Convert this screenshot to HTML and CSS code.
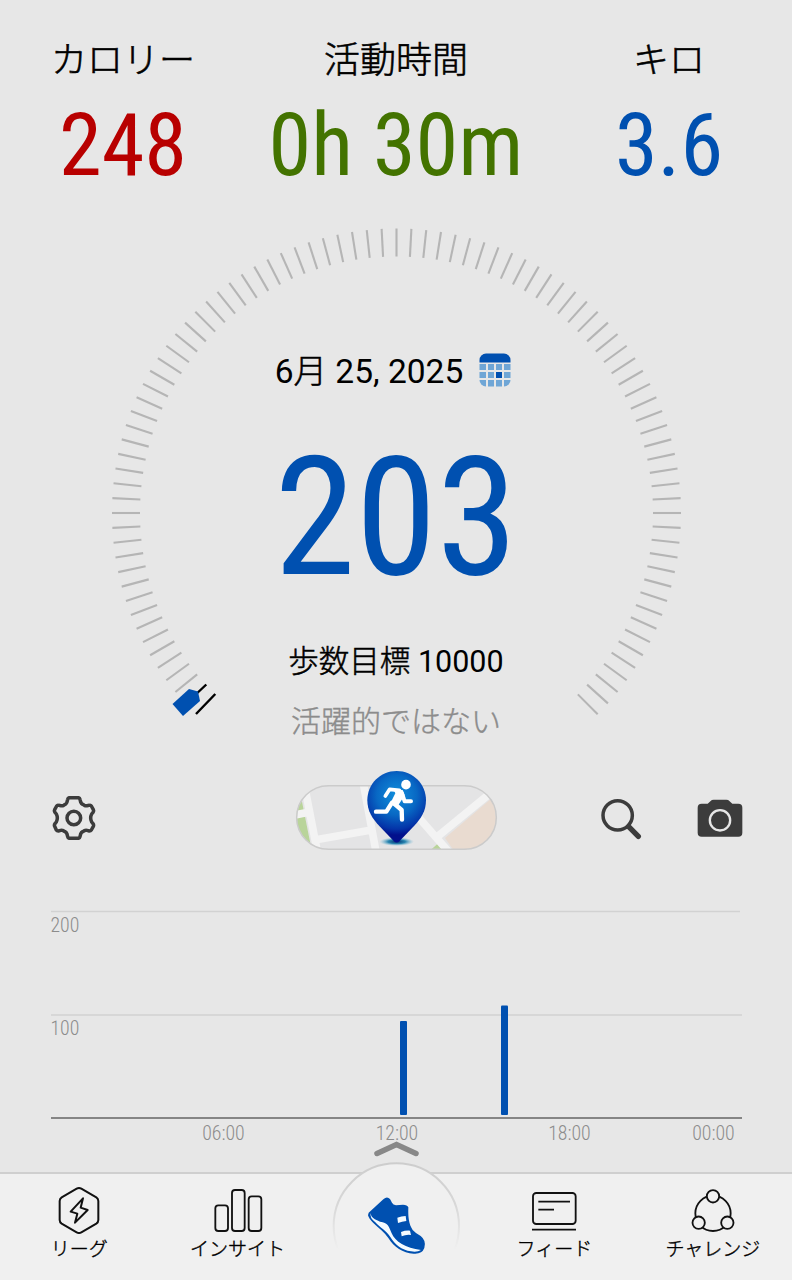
FILE: index.html
```html
<!DOCTYPE html>
<html lang="ja">
<head>
    <meta charset="UTF-8">
    <meta name="viewport" content="width=device-width, initial-scale=1.0">
    <title>歩数計</title>
    <link rel="stylesheet" href="styles.css">
</head>
<body>
    <div class="app">
        <div class="stats">
            <div class="stat">
                <div class="stat-label">カロリー</div>
                <div class="stat-value red">248</div>
            </div>
            <div class="stat">
                <div class="stat-label">活動時間</div>
                <div class="stat-value green">0h 30m</div>
            </div>
            <div class="stat">
                <div class="stat-label">キロ</div>
                <div class="stat-value blue">3.6</div>
            </div>
        </div>

        <div class="gauge">
            <svg class="gauge-dial" viewBox="0 200 792 560">
                <g id="ticks" stroke="#b5b5b5" stroke-width="2.1"></g>
                <path d="M196 714L215.300 694M192 698L206.300 684.500" stroke="#000" stroke-width="2.4"/>
                <path d="M172.500 704L189 689L198 691.500L200 701L183 716Z" fill="#0050b0"/>
            </svg>
            <div class="gauge-text">
                <div class="date">
                    <span>6<span class="kanji">月</span> 25, 2025</span>
                    <svg class="calendar" viewBox="0 0 32 34">
                        <clipPath id="cal-clip"><rect x="0.500" y="0.500" width="31" height="33" rx="6.500"/></clipPath>
                        <g clip-path="url(#cal-clip)">
                            <path d="M0 0H32V9.500H0Z" fill="#0050b0"/>
                            <path d="M0 11H7V17H0ZM9 11H15V17H9ZM17 11H23V17H17ZM25 11H32V17H25ZM0 19H7V25H0ZM9 19H15V25H9ZM25 19H32V25H25ZM0 27H7V34H0ZM9 27H15V34H9ZM17 27H23V34H17ZM25 27H32V34H25Z" fill="#6fa6d6"/>
                            <path d="M17 19H23V25H17Z" fill="#0050b0"/>
                        </g>
                    </svg>
                </div>
                <div class="count">203</div>
                <div class="goal"><span class="kanji">歩数目標</span> 10000</div>
                <div class="status">活躍的ではない</div>
            </div>
        </div>

        <div class="toolbar">
            <svg class="gear" viewBox="66 46 132 132" fill="none" stroke="#3c3c3c" stroke-width="10.5" stroke-linejoin="round">
                <path d="M119 51H144Q149 51 150 56L152 64Q154 69 158 71L163 74Q167 76 171 75L178 74Q182 73 184 76L190 87Q192 91 189 95L185 100Q179 112 185 124L189 129Q192 133 190 137L184 148Q182 151 178 151L171 149Q167 148 163 150L158 153Q154 155 152 160L150 168Q149 173 144 173H119Q114 173 113 168L111 160Q109 155 105 153L100 150Q96 148 92 149L85 151Q81 151 79 148L74 137Q72 133 75 129L79 124Q85 112 79 100L75 95Q72 91 74 87L80 76Q82 73 86 74L93 75Q97 76 101 74L106 71Q110 69 111 64L113 56Q114 51 119 51Z"/>
                <circle cx="131.500" cy="112" r="20.500"/>
            </svg>
            <svg class="map" viewBox="0 0 720 348">
                <defs>
                    <clipPath id="pill"><rect x="49" y="76" width="601" height="192" rx="96"/></clipPath>
                    <radialGradient id="pin" cx="350" cy="105" r="120" gradientUnits="userSpaceOnUse">
                        <stop offset="0" stop-color="#1290dc"/>
                        <stop offset="0.500" stop-color="#0868c4"/>
                        <stop offset="0.850" stop-color="#0434a8"/>
                        <stop offset="1" stop-color="#02108c"/>
                    </radialGradient>
                    <radialGradient id="shade">
                        <stop offset="0" stop-color="#003070"/>
                        <stop offset="0.500" stop-color="#2a86b0"/>
                        <stop offset="1" stop-color="#8ac4dc" stop-opacity="0"/>
                    </radialGradient>
                </defs>
                <g clip-path="url(#pill)">
                    <rect x="49" y="76" width="601" height="192" fill="#e4e4e5"/>
                    <path d="M40 110L66 125L95 270H40Z" fill="#b9d49a"/>
                    <path d="M495 234L640 110L660 270H520Z" fill="#e9dbd0"/>
                    <path d="M452 270L472 252L492 270Z" fill="#b9d49a"/>
                    <g stroke="#f3f3f3" stroke-width="23" fill="none">
                        <path d="M76 90L112 275M40 166L78 158M108 239L270 211M250 70L288 275M470 232L640 92"/>
                        <path d="M405 160L510 280"/>
                    </g>
                </g>
                <rect x="50" y="77" width="599" height="191" rx="95.500" fill="none" stroke="#cbcbcb" stroke-width="4.500"/>
                <ellipse cx="350" cy="245" rx="52" ry="13" fill="url(#shade)"/>
                <path d="M350 33C399 33 438 72 438 121C438 153 423 176 402 198L359 243Q350 252 341 243L298 198C277 176 262 153 262 121C262 72 301 33 350 33Z" fill="url(#pin)"/>
                <circle cx="378" cy="74" r="14.500" fill="#fff"/>
                <g fill="none" stroke="#fff" stroke-linecap="round" stroke-linejoin="round">
                    <path d="M316 108L329 88L358 91" stroke-width="11"/>
                    <path d="M366 100L374 124H393" stroke-width="12"/>
                    <path d="M336 128L319 155H288" stroke-width="13"/>
                    <path d="M344 132L365 150L366 179" stroke-width="13"/>
                </g>
                <path d="M340 88L368 90L374 106L351 142L330 132L346 100Z" fill="#fff"/>
            </svg>
            <svg class="search" viewBox="60 54 126 126" fill="none" stroke="#3c3c3c">
                <circle cx="113" cy="106" r="44" stroke-width="10.500"/>
                <path d="M146 140L175 169" stroke-width="16" stroke-linecap="round"/>
            </svg>
            <svg class="camera" viewBox="352 52 138 120">
                <path d="M366 69H384L393 61Q396 57 402 57H440Q446 57 449 61L458 69H476Q488 69 488 81V156Q488 168 476 168H366Q354 168 354 156V81Q354 69 366 69Z" fill="#3c3c3c"/>
                <circle cx="421" cy="119" r="30.500" fill="none" stroke="#e7e7e7" stroke-width="7"/>
            </svg>
        </div>

        <svg class="chart" viewBox="0 876 792 296">
            <path d="M51 911.500H740M51 1015H742" stroke="#d2d2d2" stroke-width="1.700"/>
            <path d="M51 1118H742" stroke="#858585" stroke-width="2"/>
            <text x="50.500" y="932">200</text>
            <text x="50.500" y="1035">100</text>
            <rect x="400" y="1021" width="7" height="94" rx="1" fill="#0050b0"/>
            <rect x="501" y="1005.500" width="7" height="109.500" rx="1" fill="#0050b0"/>
            <g text-anchor="middle">
                <text x="223.500" y="1140">06:00</text>
                <text x="397" y="1140">12:00</text>
                <text x="569.500" y="1140">18:00</text>
                <text x="713.500" y="1140">00:00</text>
            </g>
            <path d="M377 1153.500L396.500 1144.500L416 1153.500" fill="none" stroke="#888" stroke-width="5.500" stroke-linecap="round"/>
        </svg>

        <div class="nav">
            <div class="nav-item">
                <svg class="nav-icon" viewBox="163 103 150 150" fill="none" stroke="#111" stroke-width="6" stroke-linejoin="round">
                    <path d="M231 117Q238 113 245 117L290 143Q296 147 296 154V211Q296 218 290 222L245 248Q238 252 231 248L186 222Q180 218 180 211V154Q180 147 186 143Z"/>
                    <path d="M250 146L213 186L233 192L226 219L264 181L243 174Z"/>
                </svg>
                <span>リーグ</span>
            </div>
            <div class="nav-item">
                <svg class="nav-icon" viewBox="638 103 150 150" fill="none" stroke="#111" stroke-width="5.5">
                    <rect x="645" y="167" width="38" height="77" rx="9"/>
                    <rect x="695" y="121" width="38" height="123" rx="9"/>
                    <rect x="745" y="140" width="38" height="104" rx="9"/>
                </svg>
                <span>インサイト</span>
            </div>
            <div class="nav-item">
                <svg class="steps" viewBox="0 90 480 360">
                    <defs>
                        <linearGradient id="ring" x1="0" y1="98" x2="0" y2="360" gradientUnits="userSpaceOnUse">
                            <stop offset="0" stop-color="#cdcdcd"/>
                            <stop offset="0.500" stop-color="#d8d8d8"/>
                            <stop offset="1" stop-color="#f0f0f0"/>
                        </linearGradient>
                    </defs>
                    <circle cx="229" cy="288" r="188" fill="#f0f0f0" stroke="url(#ring)" stroke-width="6"/>
                    <path d="M146 248L190 208Q201 197 210 207L216 218Q219 225 228 226L249 224Q262 224 265 232C264 260 266 282 278 300Q286 309 302 318Q320 332 313 354Q306 373 281 371C248 369 222 351 205 324C194 307 176 295 160 279Q146 265 144 256Z" fill="#0050b0"/>
                    <path d="M152 249C153 264 165 268 180 275C204 277 207 290 215 310C225 335 257 354 303 360Q292 367 273 364C244 360 225 343 211 321C199 303 181 293 166 277Q148 263 152 249Z" fill="#f4fbff"/>
                    <path d="M232 263Q244 259 257 258L259 273Q246 274 234 279ZM243 306Q256 301 270 302L273 315Q258 313 245 319Z" fill="#f4fbff"/>
                </svg>
            </div>
            <div class="nav-item">
                <svg class="nav-icon" viewBox="150 103 150 150" fill="none" stroke="#111" stroke-width="5.500">
                    <rect x="162" y="130" width="128" height="93" rx="10"/>
                    <path d="M178 156H273M178 180H225M159 240H291"/>
                </svg>
                <span>フィード</span>
            </div>
            <div class="nav-item">
                <svg class="nav-icon" viewBox="626 103 150 150" fill="none" stroke="#111" stroke-width="5.500">
                    <circle cx="701" cy="191" r="53"/>
                    <g fill="#f0f0f0">
                        <circle cx="701" cy="140" r="18.500"/>
                        <circle cx="658" cy="219" r="18.500"/>
                        <circle cx="744" cy="219" r="18.500"/>
                    </g>
                </svg>
                <span>チャレンジ</span>
            </div>
        </div>
    </div>

    <script>
        // 3度ごとの目盛り。最初の2本は現在位置のマーカーが入る
        const ticks = document.getElementById('ticks');
        for (let i = 2; i <= 90; i++) {
            const line = document.createElementNS('http://www.w3.org/2000/svg', 'line');
            line.setAttribute('x1', 396.5);
            line.setAttribute('x2', 396.5);
            line.setAttribute('y1', 513 - 284.5);
            line.setAttribute('y2', 513 - 256.5);
            line.setAttribute('transform', `rotate(${i * 3 - 135} 396.5 513)`);
            ticks.appendChild(line);
        }
    </script>
</body>
</html>
```

FILE: styles.css
```css
body {
    margin: 0;
    background: #e7e7e7;
    color: #000;
    font-family: Roboto, 'Noto Sans CJK JP', sans-serif;
}
.app {
    width: 792px;
    height: 1280px;
    display: flex;
    flex-direction: column;
    overflow: hidden;
}
svg {
    display: block;
    flex: none;
}
.stats {
    height: 163px;
    padding-top: 37px;
    display: grid;
    grid-template-columns: 246px 300px 246px;
    text-align: center;
}
.stat-label {
    font-size: 36px;
    font-weight: 300;
    line-height: 48px;
    -webkit-text-stroke: 0.6px currentColor;
}
.kanji {
    font-weight: 300;
    -webkit-text-stroke: 0.5px currentColor;
}
.stat-value {
    margin-top: 17px;
    font-family: 'Roboto Condensed', Roboto, sans-serif;
    font-stretch: 75%;
    font-size: 86.5px;
    line-height: 88px;
    white-space: nowrap;
}
.red {
    color: #b80000;
}
.green {
    color: #437300;
}
.blue {
    color: #0050b0;
}
.gauge {
    height: 560px;
    display: grid;
}
.gauge-dial,
.gauge-text {
    grid-area: 1 / 1;
}
.gauge-dial {
    width: 792px;
    height: 560px;
}
.gauge-text {
    padding-top: 152px;
    display: flex;
    flex-direction: column;
    align-items: center;
}
.date {
    display: flex;
    align-items: center;
    gap: 16px;
    margin-right: 6px;
    height: 40px;
    font-size: 33.5px;
    line-height: 40px;
}
.calendar {
    width: 32px;
    height: 34px;
    margin-bottom: 4px;
}
.count {
    margin-top: 41px;
    font-family: 'Roboto Condensed', Roboto, sans-serif;
    font-stretch: 75%;
    font-size: 164.5px;
    line-height: 170px;
    color: #0050b0;
}
.goal {
    margin-top: 39px;
    font-size: 30.5px;
    line-height: 40px;
}
.status {
    margin-top: 20px;
    font-size: 30px;
    font-weight: 300;
    line-height: 40px;
    color: #8c8c8c;
    -webkit-text-stroke: 0.4px currentColor;
}
.toolbar {
    height: 116px;
    padding-left: 52px;
    display: flex;
    align-items: center;
}
.gear {
    width: 44px;
    height: 44px;
}
.map {
    width: 240px;
    height: 116px;
    margin-left: 184px;
}
.search {
    width: 42px;
    height: 42px;
    margin-left: 80px;
    margin-top: 2px;
}
.camera {
    width: 46px;
    height: 40px;
    margin-left: 55px;
    margin-bottom: 1px;
}
.chart {
    width: 792px;
    height: 296px;
}
.chart text {
    font-family: 'Roboto Condensed', Roboto, sans-serif;
    font-stretch: 75%;
    font-size: 19.8px;
    font-weight: 300;
    fill: #8c8c8c;
}
.nav {
    height: 106px;
    display: grid;
    grid-template-columns: repeat(5, 1fr);
    background: #f0f0f0;
    border-top: 2px solid #cfcfcf;
}
.nav-item {
    position: relative;
    display: flex;
    flex-direction: column;
    align-items: center;
    padding-top: 10px;
    font-size: 19px;
    font-weight: 300;
    line-height: 26px;
    white-space: nowrap;
    -webkit-text-stroke: 0.4px currentColor;
}
.nav-icon {
    width: 50px;
    height: 50px;
}
.nav-item span {
    margin-top: 3px;
}
.steps {
    position: absolute;
    top: -14px;
    left: 3px;
    width: 160px;
    height: 120px;
}
```
